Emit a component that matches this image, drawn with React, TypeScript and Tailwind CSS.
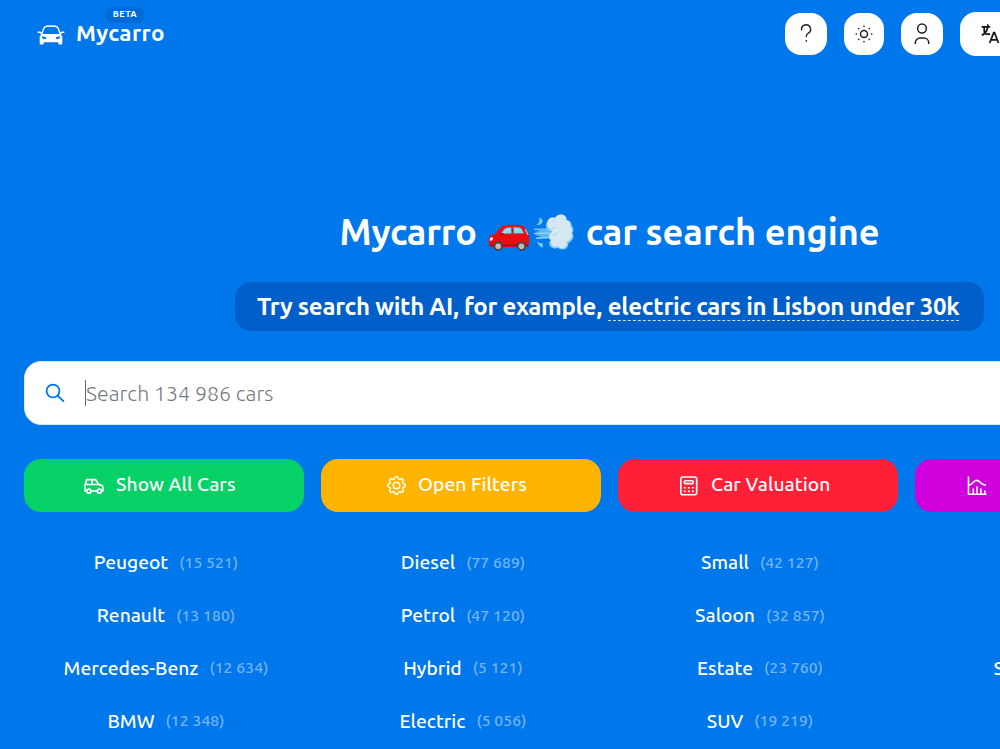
import { ReactNode } from "react";
import clsx from "clsx";
import { BsGear } from "react-icons/bs";

type Item = { name: string; count: string };

const columns: Item[][] = [
  [
    { name: "Peugeot", count: "(15 521)" },
    { name: "Renault", count: "(13 180)" },
    { name: "Mercedes-Benz", count: "(12 634)" },
    { name: "BMW", count: "(12 348)" },
  ],
  [
    { name: "Diesel", count: "(77 689)" },
    { name: "Petrol", count: "(47 120)" },
    { name: "Hybrid", count: "(5 121)" },
    { name: "Electric", count: "(5 056)" },
  ],
  [
    { name: "Small", count: "(42 127)" },
    { name: "Saloon", count: "(32 857)" },
    { name: "Estate", count: "(23 760)" },
    { name: "SUV", count: "(19 219)" },
  ],
];

function LogoIcon() {
  return (
    <svg width="28" height="20" viewBox="0 0 28 20" fill="none">
      <path d="M4.5 10 6.5 4Q7.3 1.6 9.6 1.3Q14 .8 18.4 1.3Q20.7 1.6 21.5 4L23.5 10" stroke="#fff" strokeWidth="1.4" />
      <path d="M.7 7.2h2.4l1.4 1.4M27.3 7.2h-2.4l-1.4 1.4" stroke="#fff" strokeWidth="1.5" />
      <path d="M4.7 9h18.6l2 2.2v7.4q0 .9-.9.9h-2.2q-.9 0-.9-.9v-1.4H6.7v1.4q0 .9-.9.9H3.6q-.9 0-.9-.9v-7.4z" fill="#fff" />
      <path d="m5.1 11.3 4 .9q.6 2.1-1.6 2-2.6 0-2.4-2.9ZM22.9 11.3l-4 .9q-.6 2.1 1.6 2 2.6 0 2.4-2.9Z" fill="#0077eb" />
    </svg>
  );
}

function HelpIcon() {
  return (
    <svg width="20" height="22" viewBox="0 0 20 22" fill="none" stroke="#222" strokeWidth="1.4" strokeLinecap="round">
      <path d="M5.6 6.9A4.5 4.5 0 1 1 12.4 10.2Q10.3 11.3 10.3 13.5" />
      <path d="M10.3 17.8v.2" strokeWidth="1.7" />
    </svg>
  );
}

function SunIcon() {
  return (
    <svg width="20" height="20" viewBox="0 0 20 20" fill="none" stroke="#222" strokeWidth="1.5" strokeLinecap="round">
      <circle cx="10" cy="10" r="3.5" />
      <path d="M10 2.2v.3M10 17.5v.3M2.2 10h.3M17.5 10h.3M4.6 4.6l.2.2M15.2 15.2l.2.2M4.6 15.4l.2-.2M15.2 4.8l.2-.2" />
    </svg>
  );
}

function UserIcon() {
  return (
    <svg width="20" height="24" viewBox="0 0 20 24" fill="none" stroke="#222" strokeWidth="1.5">
      <circle cx="10" cy="6.5" r="4.4" />
      <path d="M3.3 22v-1.2a4.8 4.8 0 0 1 4.8-4.8h3.8a4.8 4.8 0 0 1 4.8 4.8V22" />
    </svg>
  );
}

function TranslateIcon() {
  return (
    <svg className="shrink-0" width="22" height="22" viewBox="0 0 22 22" fill="none" stroke="#151515" strokeWidth="1.7">
      <path d="M1.6 3.9h8.6M7.9 1.4 7.7 3.9C7.3 8 5 10.8 1.8 12.2M4.2 4v3.7c0 2.3 1.3 3.4 3.3 3.4h2.6" />
      <path d="m9.7 20 4-10.4h.8l4 10.4M11.1 16.8h6" />
    </svg>
  );
}

function CarEmoji() {
  return (
    <svg width="42" height="28" viewBox="0 0 42 28">
      <path d="M1 14Q2 11 7 10.2L12.7 3.6Q14.7 1.3 18 1.1Q28 .2 34.5 1.7Q37 2.5 38.7 7.2L40.8 11.3Q42 18 40.3 21.5Q40 23 38 23H4Q1.5 23 1 20.8Z" fill="#ec0b0e" />
      <path d="M12.2 10 16.8 4.5Q17.8 3.3 23.2 3.1L23.8 9.8Z" fill="#9bd5ed" stroke="#51697c" strokeWidth=".7" />
      <path d="M25.1 3.1Q31 2.8 33.3 4.2L36.2 9.5 25.7 9.8Z" fill="#9bd5ed" stroke="#51697c" strokeWidth=".7" />
      <path d="M37.2 5.4 40 10.8" stroke="#f5aaa5" strokeWidth="1.2" />
      <path d="M1 20.5h39.5v1.8H2Z" fill="#b5050a" />
      <ellipse cx="14" cy="10.3" rx="2.3" ry="1.5" fill="#c4070b" />
      <path d="M2 14.2Q4.5 12.5 5.2 14.2Q4.7 17 1.8 16.7Z" fill="#fff4e4" />
      <circle cx="10.2" cy="22.2" r="4.8" fill="#484747" />
      <circle cx="10.2" cy="22.2" r="2.8" fill="#bdbdbd" />
      <circle cx="33.4" cy="22.2" r="4.8" fill="#484747" />
      <circle cx="33.4" cy="22.2" r="2.8" fill="#bdbdbd" />
    </svg>
  );
}

function DashEmoji() {
  return (
    <svg width="42" height="38" viewBox="0 0 42 38">
      <path d="M1 16.5q7 1 17-.5v9q-9 1-16 .2l6-1.8-7-1.7 7-1.3-7-1.4 7-1.2Z" fill="#58b9f2" />
      <path d="M1 16.2 18 16M1 20.5 18 20M3 25.3 18 24.5" stroke="#a8dcf5" strokeWidth="1.1" />
      <path d="M6 4.8q5.7 1 2.8 5.7-2 2-5.3 1.8 3.6-2.6 2.5-7.5ZM4 28q2.7 2.8 5.7 2 .5 2.7-.3 4.8Q5 33 4 28Z" fill="#79c9f3" />
      <path d="M14.5 8q2-4.5 7.5-3.5Q25 .5 30 1.8 34 3 34 7 38.8 8 38.6 12.5 42 16 39.5 20 41.8 24 39 27 36.8 30 35.5 30 35.5 35 31.5 36.3 27.5 37.3 25 34.7 20.5 37 17.3 33.5 15 30 17.5 27 14 25 16 20.5 17.5 19 18.5 18 12 17.5 13 11Z" fill="#82caed" />
      <path d="M15 7.5Q17 3.5 22 4.7 25 .5 29.5 1.8 33.3 3 33 7.2 38 7.8 37.3 13 40.2 16 38.3 19.7 39.8 24 37 26.5 35.5 28.5 33.7 28.5 34.5 33.5 30.7 35 27 35.7 25 33.3 20 34.6 18.3 31.5 17 29.5 18.3 27 15 25 16.7 21.5 18 19.5 20 18 12.5 16 15 7.5Z" fill="#d5e8f2" />
      <path d="M22 5.5q-2 1.5-1.6 3.5M17 15.5q3 .8 5-1M20 22q3 0 4.5-2" fill="none" stroke="#a9d6ea" strokeWidth="1" strokeLinecap="round" />
    </svg>
  );
}

function SearchIcon() {
  return (
    <svg width="20" height="20" viewBox="0 0 20 20" fill="none" stroke="#0077eb" strokeWidth="1.8" strokeLinecap="round">
      <circle cx="8" cy="8" r="6.4" />
      <path d="m12.8 12.8 5.6 5.4" />
    </svg>
  );
}

function VanIcon() {
  return (
    <svg width="20" height="20" viewBox="0 0 20 20" fill="none" stroke="#fff" strokeWidth="1.7" strokeLinejoin="round">
      <path d="M2.8 15H1V9.3L2.7 3.7h8.9L14.6 8.4l3.1 1.1q1.2.5 1.2 1.7V15h-1.4M7 15h6.2" />
      <path d="M1.3 8.5h13.5M8.2 3.7v4.8" />
      <circle cx="4.9" cy="15.2" r="2" />
      <circle cx="15.4" cy="15.2" r="2" />
    </svg>
  );
}

function CalculatorIcon() {
  return (
    <svg width="20" height="20" viewBox="0 0 20 20" fill="none" stroke="#fff" strokeWidth="1.6">
      <rect x="1.8" y="1" width="15.9" height="17.7" rx="2" />
      <rect x="5.3" y="4.8" width="9" height="2.8" rx="1.2" />
      <path d="M5.8 11v1.6M9.8 11v1.6M13.8 11v1.6M5.8 14.6v1.6M9.8 14.6v1.6M13.8 14.6v1.6" strokeWidth="1.8" />
    </svg>
  );
}

function HistogramIcon() {
  return (
    <svg width="20" height="20" viewBox="0 0 20 20" fill="none" stroke="#fff" strokeWidth="1.6">
      <path d="M1.5.5v17.7H19.5M1.5 9.2c4.2 0 4.4-4.8 8-4.8 3.9 0 4.3 4.9 9.5 4.9" />
      <path d="M6.3 18v-5.5M10 18v-7.8M13.8 18v-5.5M17.8 18v-3.6" />
    </svg>
  );
}

function ActionButton({ icon, label, className }: { icon: ReactNode; label?: string; className: string }) {
  return (
    <button className={clsx("flex h-[53px] w-[280px] shrink-0 items-center rounded-[17px] text-white", className)}>
      <span className="shrink-0">{icon}</span>
      {label && (
        <span className="mb-1 ml-3 text-[19.2px] font-medium leading-6 tracking-[0.08px] whitespace-nowrap">{label}</span>
      )}
    </button>
  );
}

export default function App() {
  return (
    <div className="h-[749px] w-[1000px] overflow-hidden bg-[#0077eb] font-['Ubuntu','Noto_Sans',sans-serif] text-white">
      <div className="w-[1219px] px-6">
        <header className="flex h-[68px] items-start justify-between">
          <div className="relative flex items-center pt-[19px] pl-[13px]">
            <span className="mt-1">
              <LogoIcon />
            </span>
            <span className="ml-[11px] text-[22.4px] font-semibold leading-7 tracking-[0.4px]">Mycarro</span>
            <span className="absolute top-[7px] left-[81px] flex h-4 w-10 items-center justify-center rounded-full bg-[#006bd6] text-[9px] font-semibold tracking-[0.5px]">
              BETA
            </span>
          </div>
          <div className="flex w-[410px] items-center gap-[17px] pt-3">
            <button className="flex h-[42px] w-[42px] shrink-0 items-center justify-center rounded-[16px] bg-white">
              <HelpIcon />
            </button>
            <button className="flex h-[42px] w-10 shrink-0 items-center justify-center rounded-[16px] bg-white">
              <SunIcon />
            </button>
            <button className="flex h-[42px] w-[42px] shrink-0 items-center justify-center rounded-[16px] bg-white">
              <UserIcon />
            </button>
            <button className="flex h-11 w-[140px] shrink-0 items-center rounded-[16px] bg-white pl-5">
              <TranslateIcon />
            </button>
          </div>
        </header>

        <main>
          <h1 className="mt-[140px] flex h-12 items-center justify-center text-[36px] font-semibold leading-[48px] whitespace-nowrap">
            <span className="tracking-[-0.15px]">Mycarro</span>
            <span className="mt-3 ml-[11px]">
              <CarEmoji />
            </span>
            <span className="ml-[3px]">
              <DashEmoji />
            </span>
            <span className="ml-[11px]">car search engine</span>
          </h1>

          <div className="mt-[26px] ml-[211px] flex h-[49px] w-[749px] items-center rounded-[16px] bg-[#005fc8] pl-[22px] text-[24px] font-semibold tracking-[-0.28px] whitespace-nowrap">
            <span className="leading-7">Try search with AI, for example,</span>
            <span className="mt-px ml-1.5 border-b border-dashed border-white/80 leading-[27px]">
              electric cars in Lisbon under 30k
            </span>
          </div>

          <div className="mt-[30px] flex h-[64px] items-center rounded-[17px] border border-[#d5e6f7] bg-white pl-5">
            <SearchIcon />
            <span className="ml-5 h-[26px] w-px bg-[#666]" />
            <span className="-mt-px text-[21.3px] font-light leading-7 text-[#757b82]">Search 134 986 cars</span>
          </div>

          <div className="mt-[34px] flex gap-[17px]">
            <ActionButton icon={<VanIcon />} label="Show All Cars" className="bg-[#05d166] pl-[60px]" />
            <ActionButton
              icon={<BsGear size={19} stroke="white" strokeWidth={0.3} />}
              label="Open Filters"
              className="bg-[#ffb400] pl-[66px]"
            />
            <ActionButton icon={<CalculatorIcon />} label="Car Valuation" className="bg-[#ff2038] pl-[61px]" />
            <ActionButton icon={<HistogramIcon />} className="bg-[#d000dc] pl-[52px]" />
          </div>

          <div className="mt-[24.5px] flex gap-[17px] whitespace-nowrap">
            {columns.map((items) => (
              <ul key={items[0].name} className="w-[280px] shrink-0 pl-1">
                {items.map((item) => (
                  <li key={item.name} className="flex h-[52.7px] items-center justify-center gap-[11px]">
                    <span className="text-[19.2px] font-medium">{item.name}</span>
                    <span className="text-[15.7px] font-medium tracking-[0.1px] text-[#74b4f4]">{item.count}</span>
                  </li>
                ))}
              </ul>
            ))}
            <div className="flex h-[158px] w-[280px] shrink-0 items-end pl-[78.5px]">
              <span className="flex h-[52.7px] items-center text-[19.2px] font-medium">S</span>
            </div>
          </div>
        </main>
      </div>
    </div>
  );
}
